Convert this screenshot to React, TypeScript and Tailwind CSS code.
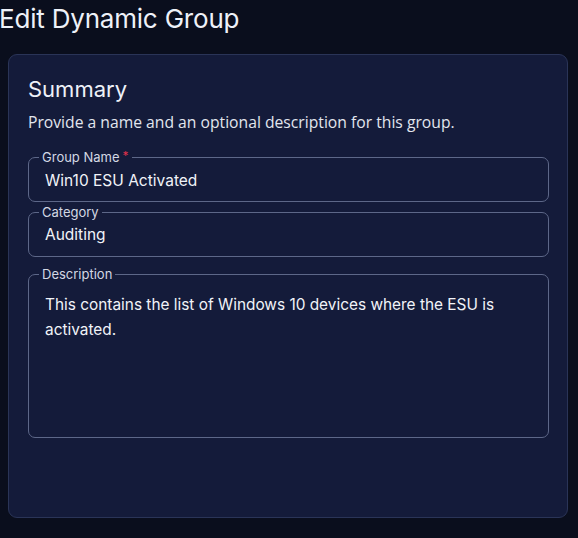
import React from 'react';

const fieldBox = 'border border-[#5d6788] rounded-[7px] m-0 min-w-0';
const legendCls = 'ml-[-3px] px-[3px] text-[13px] leading-[16px] text-[#d3d8e4]';

const App: React.FC = () => {
  return (
    <div className="w-[578px] h-[538px] bg-[#0a0e1d] overflow-hidden font-['Inter',sans-serif]">
      <h1 className="text-[26px] leading-[36px] pt-[1px] tracking-[-0.2px] text-[#eef1f8] ml-[-1px] font-normal">Edit Dynamic Group</h1>

      <div className="mt-[17px] ml-[8px] w-[560px] h-[464px] rounded-[9px] border border-[#2a3457] bg-[#141b3a] px-[19px] pt-[20px]">
        <h2 className="text-[22px] leading-[28px] text-[#eef1f8]">Summary</h2>
        <p className="mt-[8px] text-[15.7px] leading-[22px] text-[#e2e6ee] font-['Open_Sans',sans-serif]">
          Provide a name and an optional description for this group.
        </p>

        <div className="mt-[16px] w-[521px]">
          <fieldset className={`${fieldBox} h-[53px] pl-[13px] pr-[12px]`}>
            <legend className={legendCls}>
              Group Name<span className="text-[#e0314b] ml-[3px] relative top-[-2px] text-[12px]">*</span>
            </legend>
            <div className="text-[15.5px] leading-[20px] text-[#f1f3f8] pl-[3px] mt-[5px]">Win10 ESU Activated</div>
          </fieldset>

          <fieldset className={`${fieldBox} h-[53px] pl-[13px] pr-[12px] mt-[2px]`}>
            <legend className={legendCls}>Category</legend>
            <div className="text-[15.5px] leading-[20px] text-[#f1f3f8] pl-[3px] mt-[5px]">Auditing</div>
          </fieldset>

          <fieldset className={`${fieldBox} h-[172px] pl-[13px] pr-[12px] mt-[9px]`}>
            <legend className={legendCls}>Description</legend>
            <div className="text-[15.4px] leading-[25px] text-[#f1f3f8] pl-[3px] pr-[20px] mt-[10px]">
              This contains the list of Windows 10 devices where the ESU is activated.
            </div>
          </fieldset>
        </div>
      </div>
    </div>
  );
};

export default App;
